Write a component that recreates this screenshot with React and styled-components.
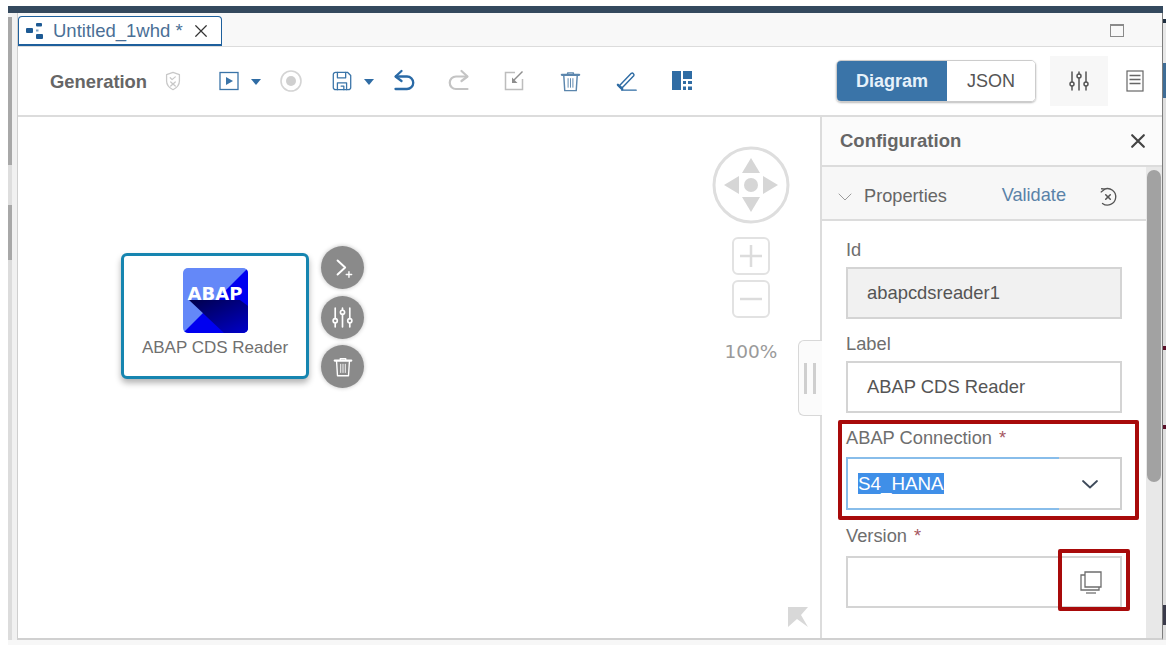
import styled, { createGlobalStyle } from "styled-components";

const GlobalStyle = createGlobalStyle`
  html, body {
    margin: 0;
    padding: 0;
    background: #fff;
    font-family: "Liberation Sans", Arial, sans-serif;
  }
`;

const BLUE = "#3a74a8";

function Icon({ size = 24, color = "currentColor", width = 1.5, children }) {
  return (
    <svg width={size} height={size} viewBox="0 0 24 24" fill="none" stroke={color} strokeWidth={width} strokeLinecap="round" strokeLinejoin="round">
      {children}
    </svg>
  );
}

const Sliders = ({ color, size = 24, width = 1.5 }) => (
  <Icon color={color} size={size} width={width}>
    <path d="M5 3v10M5 17v4M12 3v2M12 9v12M19 3v10M19 17v4" />
    <circle cx="5" cy="15" r="2" />
    <circle cx="12" cy="7" r="2" />
    <circle cx="19" cy="15" r="2" />
  </Icon>
);

const Bin = ({ color, size = 24, width = 1.5 }) => (
  <Icon color={color} size={size} width={width}>
    <path d="M3 5h18" strokeWidth="2.4" />
    <path d="M9 4.5V3h6v1.5" />
    <path d="M5 6l1 15.5h12L19 6" />
    <path d="M9.5 9v9M12 9v9M14.5 9v9" strokeWidth="1" />
  </Icon>
);

export default function App() {
  return (
    <>
      <GlobalStyle />
      <Page>
        <NavyBar />
        <Frame>
          <Gutter />
          <Window>
            <TabRow>
              <Tab>
                <svg width="18" height="16" viewBox="0 0 18 16">
                  <rect x="0" y="5" width="7" height="5" rx="1" fill="#1d5a94" />
                  <rect x="10" y="0" width="6" height="3.5" rx="1" fill="#1d5a94" />
                  <rect x="10" y="11" width="7" height="5" rx="1" fill="#1d5a94" />
                  <rect x="10" y="6.500" width="2.500" height="2" fill="#7aa0c4" />
                </svg>
                <TabTitle>Untitled_1whd *</TabTitle>
                <TabClose>
                  <Icon size={18} color="#333" width={1.6}><path d="M5 5l14 14M19 5L5 19" /></Icon>
                </TabClose>
              </Tab>
              <Maximize />
            </TabRow>

            <Toolbar>
              <Generation>Generation</Generation>
              <ToolSlot $w={42}>
                <Icon size={22} color="#c8c8c8" width={1.4}>
                  <path d="M12 2.500l7 2.500v7c0 4.500-3 7.500-7 9.500-4-2-7-5-7-9.500V5z" />
                  <path d="M9 8.500l2 2 3.500-3M9.500 13l5 4.500M14.500 13l-5 4.500" />
                </Icon>
              </ToolSlot>
              <ToolGap $w={19} />
              <ToolSlot $w={32}>
                <svg width="20" height="20" viewBox="0 0 20 20" fill="none">
                  <rect x="1" y="1.500" width="18" height="17" stroke={BLUE} strokeWidth="1.300" />
                  <path d="M7 6l7 4-7 4z" fill={BLUE} />
                </svg>
              </ToolSlot>
              <ToolSlot $w={22}><Caret /></ToolSlot>
              <ToolGap $w={8} />
              <ToolSlot $w={32}>
                <svg width="24" height="24" viewBox="0 0 24 24" fill="none">
                  <circle cx="12" cy="12" r="10" stroke="#d4d4d4" strokeWidth="1.600" />
                  <circle cx="12" cy="12" r="5" fill="#cfcfcf" />
                </svg>
              </ToolSlot>
              <ToolGap $w={19} />
              <ToolSlot $w={32}>
                <Icon size={22} color={BLUE} width={1.4}>
                  <path d="M5 2.500h13l3.500 3.500v13a2.500 2.500 0 0 1-2.500 2.500H5a2.500 2.500 0 0 1-2.500-2.500V5A2.500 2.500 0 0 1 5 2.500z" />
                  <path d="M7 2.500v6h9v-6M7 21.500V14h10v7.500M11 17.500h3v4" />
                </Icon>
              </ToolSlot>
              <ToolSlot $w={22}><Caret /></ToolSlot>
              <ToolGap $w={8} />
              <ToolSlot $w={32}>
                <Icon size={24} color="#2a6aa6" width={2.300}>
                  <path d="M9.500 2L3.500 7.500l6 4.500" />
                  <path d="M4 7.500h11a6 6 0 0 1 0 12.500H3.500" />
                </Icon>
              </ToolSlot>
              <ToolGap $w={23} />
              <ToolSlot $w={32}>
                <Icon size={24} color="#c4c4c4" width={2.200}>
                  <path d="M14.500 2l6 5.500-6 4.500" />
                  <path d="M20 7.500H9a6 6 0 0 0 0 12.500h11.500" />
                </Icon>
              </ToolSlot>
              <ToolGap $w={23} />
              <ToolSlot $w={32}>
                <svg width="20" height="20" viewBox="0 0 20 20" fill="none">
                  <path d="M11 1.500H1.500v17h17V8" stroke="#bdbdbd" strokeWidth="1.500" />
                  <path d="M18.500 0.500L9 10" stroke="#8e8e8e" strokeWidth="1.400" />
                  <path d="M8 6.500v5.500h5.500z" fill="#8e8e8e" />
                </svg>
              </ToolSlot>
              <ToolGap $w={24} />
              <ToolSlot $w={32}><Bin color="#5b86ad" size={23} /></ToolSlot>
              <ToolGap $w={25} />
              <ToolSlot $w={32}>
                <Icon size={23} color="#2f6ca4" width={1.500}>
                  <path d="M4 16L16 3.500c1.500-1 3.500 1 2.500 2.500L7 18H4z" />
                  <path d="M2 15.500L6.500 20" strokeWidth="2.500" />
                  <path d="M6 21h15" />
                </Icon>
              </ToolSlot>
              <ToolGap $w={23} />
              <ToolSlot $w={32}>
                <svg width="20" height="20" viewBox="0 0 20 20" fill="#2f6ca4">
                  <rect x="0" y="0" width="9" height="19" />
                  <rect x="11" y="0" width="9" height="8" />
                  <rect x="11" y="10" width="3" height="3" />
                  <rect x="16" y="10" width="4" height="3" />
                  <rect x="11" y="15.500" width="3" height="3.500" />
                  <rect x="16" y="15.500" width="4" height="3.500" />
                </svg>
              </ToolSlot>
              <ToolbarRight>
                <Segmented>
                  <Segment $active>Diagram</Segment>
                  <Segment>JSON</Segment>
                </Segmented>
                <ActiveTool><Sliders color="#555" /></ActiveTool>
                <PlainTool>
                  <svg width="18" height="22" viewBox="0 0 18 22" fill="none" stroke="#666" strokeWidth="1.200">
                    <rect x="1" y="1" width="16" height="20" />
                    <path d="M3.500 5.500h11M3.500 9.500h11M3.500 13.500h11" strokeWidth="1.400" />
                  </svg>
                </PlainTool>
              </ToolbarRight>
            </Toolbar>

            <Main>
              <Canvas>
                <Node>
                  <AbapLogo>
                    <LogoShade viewBox="0 0 65 65" preserveAspectRatio="none">
                      <defs>
                        <linearGradient id="abapShadow" x1="0.1" y1="0" x2="0.9" y2="1">
                          <stop offset="0" stopColor="#000050" />
                          <stop offset="1" stopColor="#0000c4" />
                        </linearGradient>
                      </defs>
                      <polygon points="65,0 65,65 0,65" fill="#0000f0" />
                      <polygon points="6,32 57,32 65,38 65,65 41,65" fill="url(#abapShadow)" />
                    </LogoShade>
                    <AbapText>ABAP</AbapText>
                  </AbapLogo>
                  <NodeLabel>ABAP CDS Reader</NodeLabel>
                </Node>
                <NodeActions>
                  <NodeAction>
                    <Icon size={26} color="#fff" width={1.800}>
                      <path d="M7 5l7 6.500L7 18" />
                      <path d="M15 18h5M17.500 15.500v5" strokeWidth="1.300" />
                    </Icon>
                  </NodeAction>
                  <NodeAction><Sliders color="#fff" size={25} width={1.600} /></NodeAction>
                  <NodeAction><Bin color="#fff" size={22} width={1.500} /></NodeAction>
                </NodeActions>

                <NavControl>
                  <svg width="80" height="80" viewBox="0 0 80 80">
                    <circle cx="40" cy="40" r="37" fill="none" stroke="#dedede" strokeWidth="3" />
                    <polygon points="40,13 49,28 31,28" fill="#d6d6d6" />
                    <polygon points="40,67 49,52 31,52" fill="#d6d6d6" />
                    <polygon points="13,40 28,31 28,49" fill="#d6d6d6" />
                    <polygon points="67,40 52,31 52,49" fill="#d6d6d6" />
                    <circle cx="40" cy="40" r="7" fill="#d6d6d6" />
                  </svg>
                  <ZoomButton>
                    <svg width="24" height="24" viewBox="0 0 24 24"><path d="M12 1v22M1 12h22" stroke="#dcdcdc" strokeWidth="2.500" /></svg>
                  </ZoomButton>
                  <ZoomButton>
                    <svg width="24" height="24" viewBox="0 0 24 24"><path d="M1 12h22" stroke="#dcdcdc" strokeWidth="2.500" /></svg>
                  </ZoomButton>
                  <ZoomValue>100%</ZoomValue>
                </NavControl>

                <PanelHandle><Grip /><Grip /></PanelHandle>

                <Corner viewBox="0 0 22 22">
                  <polygon points="1,1 21,1 14,9 21,21 10,13 1,21" fill="#d8d8d8" />
                </Corner>
              </Canvas>

              <Panel>
                <PanelHeader>
                  <PanelTitle>Configuration</PanelTitle>
                  <Icon size={20} color="#444" width={2.600}><path d="M5 5l14 14M19 5L5 19" /></Icon>
                </PanelHeader>
                <PanelBody>
                  <Scroller>
                    <SectionHead>
                      <Icon size={18} color="#999" width={1.300}><path d="M4 8l8 8 8-8" /></Icon>
                      <SectionTitle>Properties</SectionTitle>
                      <ValidateLink>Validate</ValidateLink>
                      <Icon size={22} color="#555" width={1.400}>
                        <path d="M4.500 6.500l4-3" />
                        <path d="M5 3l3.500.500M8 3.500a9 9 0 1 1-2 15.500" />
                        <path d="M9.500 9.500l5 5M14.500 9.500l-5 5" strokeWidth="1.700" />
                      </Icon>
                    </SectionHead>
                    <Fields>
                      <Field>
                        <FieldLabel>Id</FieldLabel>
                        <FieldBox $disabled>abapcdsreader1</FieldBox>
                      </Field>
                      <Field>
                        <FieldLabel>Label</FieldLabel>
                        <FieldBox>ABAP CDS Reader</FieldBox>
                      </Field>
                      <Field $gap={9}>
                        <FieldLabel>ABAP Connection <Required>*</Required></FieldLabel>
                        <SelectBox>
                          <Selected>S4_HANA</Selected>
                          <Icon size={24} color="#3e4a5a" width={1.800}><path d="M5 9l7 6.500L19 9" /></Icon>
                        </SelectBox>
                      </Field>
                      <Field $gap={10} $top={1}>
                        <FieldLabel>Version <Required>*</Required></FieldLabel>
                        <VersionBox>
                          <svg width="24" height="24" viewBox="0 0 24 24" fill="none" stroke="#6d6d6d" strokeWidth="1.300">
                            <path d="M6 2h16v15H6z" />
                            <path d="M6 5H2v15h18v-3" />
                            <path d="M7 23h10" strokeWidth="1.600" stroke="#8c8c8c" />
                          </svg>
                        </VersionBox>
                      </Field>
                    </Fields>
                  </Scroller>
                  <ScrollTrack><ScrollThumb /></ScrollTrack>
                </PanelBody>
              </Panel>
            </Main>
            <Highlight $left={820} $top={407} $w={301} $h={100} />
            <Highlight $left={1040} $top={536} $w={72} $h={62} />
          </Window>
          <RightEdge />
        </Frame>
        <BottomStrip />
      </Page>
    </>
  );
}

const Page = styled.div`
  width: 1166px;
  height: 645px;
  padding: 6px 0 0 8px;
  box-sizing: border-box;
  display: flex;
  flex-direction: column;
  overflow: hidden;
  background: #fff;
`;

const NavyBar = styled.div`
  height: 7px;
  flex: none;
  margin-right: 3px;
  background: #34495e;
`;

const Frame = styled.div`
  flex: 1;
  display: flex;
  min-height: 0;
`;

const Gutter = styled.div`
  width: 9px;
  flex: none;
  background:
    linear-gradient(
        180deg,
        #f4f4f4 0 4px,
        #a8a8a8 4px 152px,
        #dedede 152px 192px,
        #a8a8a8 192px 247px,
        #dcdcdc 247px
      )
      left / 4px 100% no-repeat,
    #f1f1f1;
`;

const Window = styled.div`
  position: relative;
  flex: 1;
  min-width: 0;
  display: flex;
  flex-direction: column;
  border-left: 1px solid #cfcfcf;
  border-right: 1px solid #7d7d7d;
  border-bottom: 2px solid #d0d0d0;
`;

const RightEdge = styled.div`
  width: 3px;
  flex: none;
  background: linear-gradient(
    180deg,
    #fff 0 6px,
    #1f2f40 6px 10px,
    #e8e8e8 10px 50px,
    #3f6d96 50px 85px,
    #dedede 85px 333px,
    #5a1028 333px 337px,
    #dedede 337px 412px,
    #5a1028 412px 416px,
    #dedede 416px 592px,
    #3a3a4a 592px 612px,
    #dedede 612px
  );
`;

const TabRow = styled.div`
  height: 34px;
  flex: none;
  box-sizing: border-box;
  display: flex;
  align-items: flex-end;
  justify-content: space-between;
  padding: 0 38px 0 0;
  background: #f8f8f8;
  border-bottom: 1px solid #dcdcdc;
`;

const Tab = styled.div`
  width: 204px;
  height: 30px;
  box-sizing: border-box;
  display: flex;
  align-items: center;
  padding-left: 7px;
  background: #fff;
  border: 1px solid #1d5f9c;
  border-bottom-width: 2px;
  border-radius: 4px 4px 0 0;
`;

const TabTitle = styled.span`
  margin-left: 9px;
  font-size: 18.5px;
  color: #4a6f96;
  white-space: nowrap;
`;

const TabClose = styled.span`
  display: flex;
  margin-left: 9px;
`;

const Maximize = styled.div`
  width: 14px;
  height: 13px;
  box-sizing: border-box;
  margin-bottom: 9px;
  border: 1.500px solid #8a8a8a;
  border-top-width: 2.500px;
`;

const Toolbar = styled.div`
  height: 70px;
  flex: none;
  box-sizing: border-box;
  display: flex;
  align-items: center;
  padding-left: 32px;
  background: #fff;
  border-bottom: 2px solid #dcdcdc;
`;

const Generation = styled.span`
  width: 102px;
  flex: none;
  padding-top: 2px;
  font-size: 18.4px;
  font-weight: 700;
  color: #666;
`;

const ToolSlot = styled.span`
  width: ${(p) => p.$w}px;
  flex: none;
  display: flex;
  align-items: center;
  justify-content: center;
`;

const ToolGap = styled.span`
  width: ${(p) => p.$w}px;
  flex: none;
`;

const Caret = styled.span`
  width: 0;
  height: 0;
  margin-top: 2px;
  border-left: 5.500px solid transparent;
  border-right: 5.500px solid transparent;
  border-top: 6px solid #2f6ca4;
`;

const ToolbarRight = styled.div`
  margin-left: auto;
  display: flex;
  align-items: center;
`;

const Segmented = styled.div`
  display: flex;
  width: 200px;
  height: 42px;
  box-sizing: border-box;
  border: 1px solid #ccc;
  border-radius: 5px;
  overflow: hidden;
  box-shadow: 0 1px 2px #bbb;
`;

const Segment = styled.div`
  flex: ${(p) => (p.$active ? "none" : 1)};
  width: ${(p) => (p.$active ? "110px" : "auto")};
  display: flex;
  align-items: center;
  justify-content: center;
  font-size: 18px;
  font-weight: ${(p) => (p.$active ? 700 : 400)};
  background: ${(p) => (p.$active ? "#3a74a8" : "#fff")};
  color: ${(p) => (p.$active ? "#e6f1fa" : "#555")};
`;

const ActiveTool = styled.div`
  width: 58px;
  height: 50px;
  margin-left: 14px;
  display: flex;
  align-items: center;
  justify-content: center;
  background: #f7f7f7;
`;

const PlainTool = styled.div`
  width: 54px;
  display: flex;
  justify-content: center;
`;

const Main = styled.div`
  flex: 1;
  min-height: 0;
  display: flex;
`;

const Canvas = styled.div`
  position: relative;
  flex: 1;
  background: #fff;
`;

const Node = styled.div`
  position: absolute;
  left: 103px;
  top: 136px;
  width: 188px;
  height: 126px;
  box-sizing: border-box;
  display: flex;
  flex-direction: column;
  align-items: center;
  padding-top: 12px;
  background: #fff;
  border: 3px solid #1685b0;
  border-radius: 6px;
  box-shadow: 0 4px 6px rgba(0, 0, 0, 0.3);
`;

const AbapLogo = styled.div`
  position: relative;
  width: 65px;
  height: 65px;
  flex: none;
  overflow: hidden;
  border-radius: 5px;
  background: #6488f8;
`;

const LogoShade = styled.svg`
  position: absolute;
  inset: 0;
  width: 100%;
  height: 100%;
`;

const AbapText = styled.span`
  position: absolute;
  left: 0;
  right: 0;
  top: 15px;
  text-align: center;
  font-family: "DejaVu Sans", sans-serif;
  font-size: 18px;
  font-weight: 700;
  color: #fff;
`;

const NodeLabel = styled.div`
  margin-top: 5px;
  font-size: 17px;
  color: #70706f;
  white-space: nowrap;
`;

const NodeActions = styled.div`
  position: absolute;
  left: 303px;
  top: 129px;
  display: flex;
  flex-direction: column;
  gap: 6.5px;
`;

const NodeAction = styled.div`
  width: 43px;
  height: 43px;
  display: flex;
  align-items: center;
  justify-content: center;
  border-radius: 50%;
  background: #8a8a8a;
  box-shadow: 0 0 4px rgba(0, 0, 0, 0.25);
`;

const NavControl = styled.div`
  position: absolute;
  left: 693px;
  top: 28px;
  width: 80px;
  display: flex;
  flex-direction: column;
  align-items: center;
`;

const ZoomButton = styled.div`
  width: 38px;
  height: 38px;
  box-sizing: border-box;
  margin-bottom: 5px;
  display: flex;
  align-items: center;
  justify-content: center;
  border: 2px solid #e2e2e2;
  border-radius: 6px;
  &:first-of-type {
    margin-top: 12px;
  }
`;

const ZoomValue = styled.div`
  margin-top: 18px;
  font-family: "DejaVu Sans", sans-serif;
  font-size: 18.5px;
  color: #9a9a9a;
`;

const PanelHandle = styled.div`
  position: absolute;
  right: -2px;
  top: 223px;
  z-index: 1;
  width: 24px;
  height: 76px;
  box-sizing: border-box;
  display: flex;
  justify-content: center;
  align-items: center;
  gap: 6px;
  padding-right: 2px;
  background: #fbfbfb;
  border: 1px solid #d8d8d8;
  border-right: none;
  border-radius: 6px 0 0 6px;
`;

const Grip = styled.span`
  width: 3px;
  height: 31px;
  background: #cfcfcf;
`;

const Corner = styled.svg`
  position: absolute;
  right: 11px;
  bottom: 10px;
  width: 22px;
  height: 22px;
`;

const Panel = styled.div`
  width: 342px;
  flex: none;
  box-sizing: border-box;
  display: flex;
  flex-direction: column;
  border-left: 2px solid #dcdcdc;
  background: #fff;
`;

const PanelHeader = styled.div`
  height: 50px;
  flex: none;
  box-sizing: border-box;
  display: flex;
  align-items: center;
  justify-content: space-between;
  padding: 0 14px 0 18px;
  background: #fbfbfb;
  border-bottom: 2px solid #dcdcdc;
`;

const PanelTitle = styled.span`
  font-size: 18.5px;
  font-weight: 700;
  color: #666;
`;

const PanelBody = styled.div`
  flex: 1;
  min-height: 0;
  display: flex;
`;

const Scroller = styled.div`
  flex: 1;
  min-width: 0;
  display: flex;
  flex-direction: column;
`;

const SectionHead = styled.div`
  height: 54px;
  flex: none;
  box-sizing: border-box;
  display: flex;
  align-items: center;
  padding: 7px 27px 0 14px;
  background: #f7f7f7;
  border-bottom: 2px solid #dcdcdc;
`;

const SectionTitle = styled.span`
  margin-left: 10px;
  font-size: 18.2px;
  color: #666;
`;

const ValidateLink = styled.span`
  margin-left: auto;
  margin-right: 31px;
  margin-bottom: 2px;
  font-size: 18.2px;
  color: #5a82a8;
`;

const Fields = styled.div`
  padding: 18px 24px 0 24px;
  display: flex;
  flex-direction: column;
  gap: 14px;
`;

const Field = styled.div`
  display: flex;
  flex-direction: column;
  gap: ${(p) => p.$gap ?? 7}px;
  margin-top: ${(p) => p.$top ?? 0}px;
`;

const FieldLabel = styled.div`
  height: 21px;
  line-height: 21px;
  font-size: 18.3px;
  color: #6e6e6e;
`;

const Required = styled.span`
  margin-left: 2px;
  color: #a5565f;
`;

const FieldBox = styled.div`
  height: 52px;
  box-sizing: border-box;
  display: flex;
  align-items: center;
  padding-left: 19px;
  font-size: 18.4px;
  color: #555;
  background: ${(p) => (p.$disabled ? "#f1f1f1" : "#fff")};
  border: 2px solid #d4d4d4;
`;

const SelectBox = styled.div`
  height: 53px;
  box-sizing: border-box;
  display: flex;
  align-items: center;
  justify-content: space-between;
  padding: 0 18px 0 10px;
  border: 2px solid #d0d0d0;
  border-image: linear-gradient(90deg, #88bdea 0, #88bdea 214px, #d0d0d0 214px) 1;
`;

const Selected = styled.span`
  font-size: 18.8px;
  line-height: 21px;
  color: #fff;
  background: #3f8fe8;
`;

const VersionBox = styled.div`
  height: 52px;
  box-sizing: border-box;
  display: flex;
  align-items: center;
  justify-content: flex-end;
  padding-right: 17px;
  border: 2px solid #d4d4d4;
`;

const ScrollTrack = styled.div`
  width: 16px;
  flex: none;
  background: #e8e8e8;
`;

const ScrollThumb = styled.div`
  width: 14px;
  height: 312px;
  margin-left: 1px;
  margin-top: 3px;
  border-radius: 7px;
  background: #a2a2a2;
`;

const Highlight = styled.div`
  position: absolute;
  left: ${(p) => p.$left}px;
  top: ${(p) => p.$top}px;
  width: ${(p) => p.$w}px;
  height: ${(p) => p.$h}px;
  box-sizing: border-box;
  border: 4px solid #a80a0a;
  border-radius: 2px;
  pointer-events: none;
`;

const BottomStrip = styled.div`
  height: 5px;
  flex: none;
  background: #f7f7f7;
`;
